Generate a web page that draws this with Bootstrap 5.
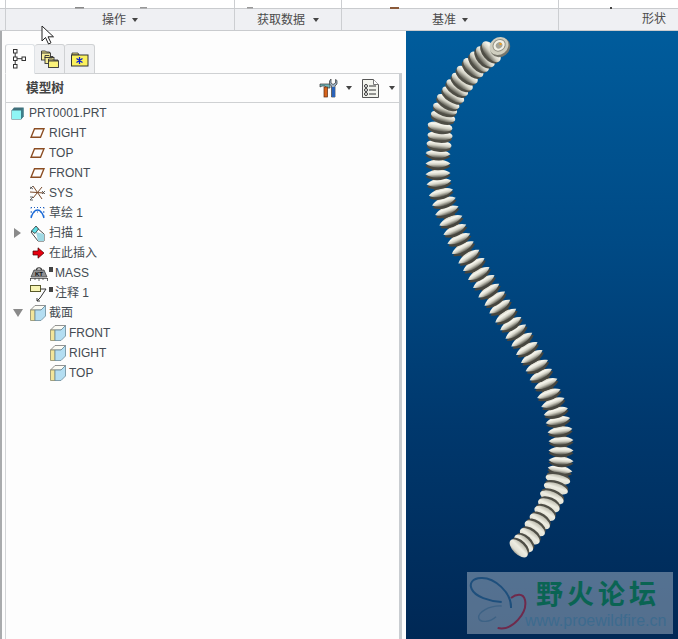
<!DOCTYPE html>
<html lang="zh-CN">
<head>
<meta charset="utf-8">
<title>模型树</title>
<link href="https://cdn.jsdelivr.net/npm/bootstrap@5.3.0/dist/css/bootstrap.min.css" rel="stylesheet">
<style>
html,body{height:100%;margin:0;overflow:hidden}
body{background:#fdfdfd;font:12px/20px "Liberation Sans","Noto Sans CJK SC",sans-serif;color:#444b52;position:relative}
.app-frame{width:678px;height:639px}
.rib-top,.rib-bar{padding-left:5px}
.rib-top{height:9px;border-bottom:1px solid #c9cbce;background:#fff}
.rib-bar{height:22px;border-bottom:1px solid #c9cbce;background:#eff0f3;overflow:hidden}
.rib-top>div,.rib-bar>div{border-left:1px solid #ccced1;flex:none;height:100%}
.rcell1{width:229px}.rcell2{width:107px}.rcell3{width:217px}.rcell4{width:120px}
.rib-bar>div{line-height:20px;font-size:12px;color:#4b4b4b;white-space:nowrap}
.rcell4-lbl{margin-left:83px}
.tri{display:inline-block;width:0;height:0;border-left:3.5px solid transparent;border-right:3.5px solid transparent;border-top:4px solid #444;flex:none}
.gap-tri{gap:6px}
.sidebar{width:406px;flex:none;border-left:2px solid #a9abad;padding-top:13px;background:#fdfdfd}
.tab-strip.nav-tabs{margin-left:3px;padding:0;height:30px;border:0;gap:0;flex-wrap:nowrap}
.tab-strip .nav-link{width:30px;height:30px;padding:0;margin:0;border:1px solid #cfd1d3;border-bottom:1px solid #cfd1d3;border-left:0;border-radius:3px 3px 0 0;background:#eff0f2;display:flex;align-items:center;justify-content:center}
.tab-strip li:first-child .nav-link{border-left:1px solid #cfd1d3}
.tab-strip .nav-link.active{background:#fdfdfd;border-bottom-color:#fdfdfd}
.tree-panel{margin-left:3px;width:397px;height:566px;margin-top:-1px;border-left:1px solid #d3d5d7;border-top:1px solid #cfd1d3;border-right:3px solid #c9cdd1}
.panel-head{height:29px;border-bottom:1px solid #cfd1d3;padding-left:20px;padding-right:4px}
.panel-title{font-weight:700;font-size:12.7px;color:#444}
.tool-tri{margin-left:7px}
.tool-doc{margin-left:10px}
.tool-tri2{margin-left:10px}
.tree-list{margin:0;padding:0;list-style:none}
.tree-row{height:20px;display:flex;align-items:center;white-space:nowrap}
.slot0{width:5px;flex:none}
.slot1{width:24px;flex:none;display:flex;align-items:center;padding-left:8px}
.slot2{width:44px;flex:none}
.ico{flex:none;margin-right:4px;display:block}
.ico-wide{margin-right:1px}
.ico-part{margin-right:5px}
.ico-sec{margin-right:3px}
.tw-down{margin-left:-1px}
.mark-dot{width:4px;height:5px;background:#444;flex:none;margin:-8px 2px 0 0}
.viewport{flex:1 1 auto;height:608px;background:linear-gradient(180deg,#005c9c 0%,#004a85 35%,#00386d 65%,#002855 100%);position:relative;overflow:hidden}
.viewport svg{display:block}
.wmark{position:absolute;left:61px;top:541px;width:206px;height:62px;background:rgba(255,255,255,.33)}
.wm-logo{position:absolute;left:1px;top:2px}
.wm-cn{position:absolute;left:69px;top:5px;font:700 27px/32px "Noto Sans CJK SC",sans-serif;letter-spacing:4px;color:#0a6453;white-space:nowrap}
.wm-url{position:absolute;left:58px;top:39px;font:16px/20px "Liberation Sans",sans-serif;color:#3d6b8e;white-space:nowrap}
.cursor-arrow{position:absolute;left:41px;top:25px}
</style>
</head>
<body>
<div class="app-frame d-flex flex-column">
  <div class="rib-top d-flex">
    <div class="rcell1"><svg width="229" height="8"><rect x="69" width="9" height="1.5" fill="#8a8a8a"/><rect x="134" width="7" height="1.5" fill="#999"/></svg></div>
    <div class="rcell2"><svg width="106" height="8"><rect x="12" width="6" height="1.5" fill="#999"/></svg></div>
    <div class="rcell3"><svg width="216" height="8"><rect x="48" width="9" height="2" fill="#8a5a3a"/></svg></div>
    <div class="rcell4"><svg width="119" height="8"><rect x="51" width="2" height="2" fill="#444"/></svg></div>
  </div>
  <div class="rib-bar d-flex">
    <div class="rcell1 d-flex align-items-center justify-content-center gap-tri"><span>操作</span><i class="tri"></i></div>
    <div class="rcell2 d-flex align-items-center justify-content-center gap-2"><span>获取数据</span><i class="tri"></i></div>
    <div class="rcell3 d-flex align-items-center justify-content-center gap-tri"><span>基准</span><i class="tri"></i></div>
    <div class="rcell4"><span class="rcell4-lbl d-inline-block">形状</span></div>
  </div>
  <div class="d-flex flex-grow-1">
    <aside class="sidebar">
      <ul class="nav nav-tabs tab-strip">
        <li class="nav-item"><a class="nav-link active" href="#" aria-label="tree">
          <svg width="14" height="20" viewBox="0 0 14 20"><g fill="#fff" stroke="#333"><rect x=".5" y=".5" width="3.5" height="3.5"/><rect x=".5" y="8" width="3.5" height="3.5"/><rect x=".5" y="15.5" width="3.5" height="3.5"/><rect x="9" y="8" width="3.5" height="3.5"/><path d="M2.2 4v4M2.2 11.500v4M4 9.700h5" fill="none"/></g></svg></a></li>
        <li class="nav-item"><a class="nav-link" href="#" aria-label="layers">
          <svg width="20" height="20" viewBox="0 0 20 20"><g stroke="#333" stroke-width=".9"><path d="M1.500 6V2h4l1 1h3v3z" fill="#f4e98a"/><rect x="1.500" y="4" width="9" height="7" fill="#f7ef9a"/><path d="M5 9V6.500h4l1 1h3V9z" fill="#f4e98a"/><rect x="5" y="8.500" width="9" height="6" fill="#f7ef9a"/><path d="M8.500 12v-2h4l1 1h4.500v1z" fill="#f4e98a"/><rect x="8.500" y="12" width="10" height="6.500" fill="#fbf27a"/></g></svg></a></li>
        <li class="nav-item"><a class="nav-link" href="#" aria-label="favorites">
          <svg width="18" height="15" viewBox="0 0 18 15"><path d="M1 3V1h6l1 2z" fill="#e9dc7a" stroke="#333" stroke-width=".8"/><rect x=".5" y="3" width="16.500" height="11" fill="#fbf15c" stroke="#333"/><path d="M8.500 5v7M5.500 6.500l6 4M11.500 6.500l-6 4" stroke="#0b1fd0" stroke-width="1.300"/></svg></a></li>
      </ul>
      <section class="tree-panel">
        <div class="panel-head d-flex align-items-center">
          <span class="panel-title">模型树</span>
          <span class="ms-auto d-flex align-items-center">
            <svg width="20" height="20" viewBox="0 0 20 20"><path d="M1 6h10v4H7.500L6 8H3L1 9z" fill="#6fb4b8" stroke="#333" stroke-width=".7"/><rect x="5" y="9" width="3.500" height="10" fill="#d8641c" stroke="#5a2a10" stroke-width=".7"/><path d="M12 1v4l2 1.500L16.500 5V1.500l1.500 1v3.500l-2 2v11h-3.500V8l-2-2V3z" fill="#9fb4c6" stroke="#333" stroke-width=".7"/><rect x="13" y="9" width="3" height="10" fill="#2a62b8"/></svg>
            <i class="tri tool-tri"></i>
            <svg class="tool-doc" width="17" height="19" viewBox="0 0 17 19"><path d="M.5.500h11l5 5v13H.5z" fill="#f4f5ef" stroke="#555"/><path d="M11.500.500v5h5" fill="#fff" stroke="#777"/><g fill="#fff" stroke="#333"><circle cx="4" cy="7" r="1.500"/><circle cx="4" cy="11" r="1.500"/><circle cx="4" cy="15" r="1.500"/></g><path d="M7 7h7M7 11h7M7 15h7" stroke="#333"/></svg>
            <i class="tri tool-tri2"></i>
          </span>
        </div>
        <ul class="tree-list">
          <li class="tree-row"><span class="slot0"></span>
            <svg class="ico ico-part" width="13" height="13" viewBox="0 0 13 13"><path d="M.5 3.500 3 .5h9.500v9L10 12.500H.5z" fill="#3f6f7a"/><rect x="1" y="3.500" width="9" height="8.500" fill="#8ff5f5"/><path d="M10 3.500 12.500.5v9L10 12.500z" fill="#3d7f8a"/></svg>
            <span>PRT0001.PRT</span></li>
          <li class="tree-row"><span class="slot1"></span>
            <svg class="ico" width="15" height="10" viewBox="0 0 15 10"><path d="M4.500.7h9.500L10.500 9.300H1z" fill="none" stroke="#8b4d22" stroke-width="1.400"/></svg><span>RIGHT</span></li>
          <li class="tree-row"><span class="slot1"></span>
            <svg class="ico" width="15" height="10" viewBox="0 0 15 10"><path d="M4.500.7h9.500L10.500 9.300H1z" fill="none" stroke="#8b4d22" stroke-width="1.400"/></svg><span>TOP</span></li>
          <li class="tree-row"><span class="slot1"></span>
            <svg class="ico" width="15" height="10" viewBox="0 0 15 10"><path d="M4.500.7h9.500L10.500 9.300H1z" fill="none" stroke="#8b4d22" stroke-width="1.400"/></svg><span>FRONT</span></li>
          <li class="tree-row"><span class="slot1"></span>
            <svg class="ico" width="15" height="16" viewBox="0 0 15 16"><path d="M3 1l9 13M12 2 3 13M0 7l14 1" stroke="#7a4a2a" stroke-width="1" fill="none"/><path d="M0 2l3 2M3 1 0 4M12 6l3 3M15 6l-3 3M0 12h3l-3 3h3" stroke="#444" stroke-width=".8" fill="none"/></svg><span>SYS</span></li>
          <li class="tree-row"><span class="slot1"></span>
            <svg class="ico" width="15" height="14" viewBox="0 0 15 14"><path d="M1 1.500h13M1 6h13" stroke="#1f5fbf" stroke-dasharray="1 2" fill="none"/><path d="M1 1.500v12M14 1.500v12" stroke="#1f5fbf" stroke-dasharray="1 3" fill="none"/><path d="M1 12C3 5 6 4 7.500 4S12 5 14 12" stroke="#1668d8" stroke-width="1.400" fill="none"/></svg><span>草绘 1</span></li>
          <li class="tree-row"><span class="slot1"><svg width="8" height="10" viewBox="0 0 8 10"><path d="M0 0l7 5-7 5z" fill="#8a8a8a"/></svg></span>
            <svg class="ico" width="15" height="17" viewBox="0 0 15 17"><path d="M1 7 6 2l8 7v7H8z" fill="#fff" stroke="#333" stroke-width=".9"/><path d="M6 7 14 9v7H8z" fill="#9fd9e4"/><path d="M1.500 6 6 1l2.500 3L5 8.500z" fill="#5fe0e8" stroke="#333" stroke-width=".8"/></svg><span>扫描 1</span></li>
          <li class="tree-row"><span class="slot1"></span>
            <svg class="ico" width="15" height="12" viewBox="0 0 15 12"><path d="M3 4h5V.8L14 6l-6 5.200V8H3z" fill="#e80010" stroke="#400" stroke-width=".7"/></svg><span>在此插入</span></li>
          <li class="tree-row"><span class="slot1"></span>
            <svg class="ico ico-wide" width="18" height="15" viewBox="0 0 18 15"><path d="M6.500 4C6.500 1 11.500 1 11.500 4" fill="none" stroke="#333" stroke-width="1.200"/><path d="M4 4h10l3 7H1z" fill="#8f9092" stroke="#333" stroke-width=".7"/><path d="M0 12.500h18M.5 12v3M5 12v2M9 12v3M13 12v2M17.500 12v3" stroke="#444" stroke-width=".8"/><text x="5" y="10" font-size="6" font-weight="700" fill="#111" font-family="Liberation Sans">KT</text></svg><i class="mark-dot"></i><span>MASS</span></li>
          <li class="tree-row"><span class="slot1"></span>
            <svg class="ico ico-wide" width="18" height="18" viewBox="0 0 18 18"><rect x=".5" y="1.500" width="10" height="6" fill="#f7f4b4" stroke="#5a5a2a"/><path d="M10.500 5H16L10 14M10 14l-3 3M7 14v3h3" fill="none" stroke="#333"/></svg><i class="mark-dot"></i><span>注释 1</span></li>
          <li class="tree-row"><span class="slot1"><svg class="tw-down" width="10" height="8" viewBox="0 0 10 8"><path d="M0 0h10L5 8z" fill="#8a8a8a"/></svg></span>
            <svg class="ico ico-sec" width="16" height="16" viewBox="0 0 16 16"><path d="M.5 5 5 .5h10.500L11 5z" fill="#fbfbf4" stroke="#777" stroke-width=".8"/><path d="M.5 5H5v10.500H.5z" fill="#f2e59a" stroke="#8a8a6a" stroke-width=".8"/><path d="M5 5h6l4.500-4.500V11L11 15.500H5z" fill="#b4def2" stroke="#6a8a9a" stroke-width=".8"/></svg><span>截面</span></li>
          <li class="tree-row"><span class="slot2"></span>
            <svg class="ico ico-sec" width="16" height="16" viewBox="0 0 16 16"><path d="M.5 5 5 .5h10.500L11 5z" fill="#fbfbf4" stroke="#777" stroke-width=".8"/><path d="M.5 5H5v10.500H.5z" fill="#f2e59a" stroke="#8a8a6a" stroke-width=".8"/><path d="M5 5h6l4.500-4.500V11L11 15.500H5z" fill="#b4def2" stroke="#6a8a9a" stroke-width=".8"/></svg><span>FRONT</span></li>
          <li class="tree-row"><span class="slot2"></span>
            <svg class="ico ico-sec" width="16" height="16" viewBox="0 0 16 16"><path d="M.5 5 5 .5h10.500L11 5z" fill="#fbfbf4" stroke="#777" stroke-width=".8"/><path d="M.5 5H5v10.500H.5z" fill="#f2e59a" stroke="#8a8a6a" stroke-width=".8"/><path d="M5 5h6l4.500-4.500V11L11 15.500H5z" fill="#b4def2" stroke="#6a8a9a" stroke-width=".8"/></svg><span>RIGHT</span></li>
          <li class="tree-row"><span class="slot2"></span>
            <svg class="ico ico-sec" width="16" height="16" viewBox="0 0 16 16"><path d="M.5 5 5 .5h10.500L11 5z" fill="#fbfbf4" stroke="#777" stroke-width=".8"/><path d="M.5 5H5v10.500H.5z" fill="#f2e59a" stroke="#8a8a6a" stroke-width=".8"/><path d="M5 5h6l4.500-4.500V11L11 15.500H5z" fill="#b4def2" stroke="#6a8a9a" stroke-width=".8"/></svg><span>TOP</span></li>
        </ul>
      </section>
    </aside>
    <main class="viewport">
      <svg id="spring" width="272" height="608" viewBox="406 31 272 608" xmlns="http://www.w3.org/2000/svg">
        <defs>
          <linearGradient id="coilFill" x1="0" y1="0" x2="0" y2="1">
            <stop offset="0" stop-color="#d6d5c9"/><stop offset=".3" stop-color="#f7f6ee"/><stop offset=".6" stop-color="#d2d1c5"/><stop offset=".85" stop-color="#85847a"/><stop offset="1" stop-color="#5a5950"/>
          </linearGradient>
          <linearGradient id="coilFillLow" x1="0" y1="0" x2="0" y2="1">
            <stop offset="0" stop-color="#bdbcae"/><stop offset=".4" stop-color="#eeede2"/><stop offset=".8" stop-color="#dfded2"/><stop offset="1" stop-color="#a5a498"/>
          </linearGradient>
        </defs>
      </svg>
      <div class="wmark">
        <svg class="wm-logo" width="60" height="60" viewBox="21 130 180 180">
          <path d="M150 232C152 185 100 140 60 142C34 143 24 158 32 175C42 198 85 212 122 214" fill="none" stroke="#1e4f7c" stroke-width="6"/>
          <path d="M110 292C155 302 200 245 192 208C187 186 165 190 150 202" fill="none" stroke="#6f2a4c" stroke-width="6"/>
          <path d="M122 226C85 224 50 245 53 262C56 276 86 276 105 258" fill="none" stroke="#3d6285" stroke-width="4"/>
        </svg>
        <div class="wm-cn">野火论坛</div>
        <div class="wm-url">www.proewildfire.cn</div>
      </div>
    </main>
  </div>
</div>
<svg class="cursor-arrow" width="14" height="21" viewBox="0 0 14 21"><path d="M1 1v15l3.500-3.500 3 6.500 2.500-1.200-3-6H12.500z" fill="#fff" stroke="#222" stroke-width="1"/></svg>
<script src="https://cdn.jsdelivr.net/npm/bootstrap@5.3.0/dist/js/bootstrap.bundle.min.js"></script>
<script>
(function(){
  var pts=[[491,52],[485,57],[479,62],[473,68],[467,75],[462,82],[457,88],[453,95],[448,102],[445,109],[443,117],[440,127],[440,136],[439,145],[438,154],[438,164],[438,174],[439,183],[441,193],[444,202],[447,211],[451,221],[455,230],[459,239],[463,248],[469,257],[474,265],[479,274],[484,282],[489,291],[495,299],[500,307],[506,316],[511,324],[516,332],[522,340],[527,349],[532,357],[537,366],[541,375],[546,384],[549,394],[553,403],[556,412],[558,421],[560,431],[561,441],[561,451],[561,461],[560,470],[558,479],[556,488],[552,497],[549,505],[545,513],[540,521],[535,528],[530,536],[524,543],[519,548]];
  var NS='http://www.w3.org/2000/svg', svg=document.getElementById('spring');
  function el(n,a,p){var e=document.createElementNS(NS,n);for(var k in a)e.setAttribute(k,a[k]);(p||svg).appendChild(e);return e;}
  el('polyline',{points:pts.map(function(p){return p.join(',');}).join(' '),fill:'none',stroke:'#44433c','stroke-width':12});
  function hAt(y){ if(y<100)return 6.500-(y-50)*.025; if(y<170)return 5.200-(y-100)*.015; if(y>500)return 5.800; if(y>470)return 4.200+(y-470)*.05; return 4.200; }
  function coil(i,low){
    var a=pts[Math.max(i-1,0)],b=pts[Math.min(i+1,pts.length-1)],p=pts[i];
    var ang=Math.atan2(b[1]-a[1],b[0]-a[0])*180/Math.PI-90;
    var h=hAt(p[1]),r=p[1]>500?11.500:12.500;
    var off=low?-2:2.200,fill=low?'url(#coilFillLow)':'url(#coilFill)';
    var g=el('g',{transform:'translate('+p[0]+' '+p[1]+') rotate('+ang+')'});
    if(h>4.500){
      el('ellipse',{cx:0,cy:off,rx:r-.5,ry:h,fill:'#4f4e46'},g);
      el('ellipse',{cx:0,cy:-off*.2,rx:r,ry:h,fill:fill},g);
    }else{
      var lens=function(o,f){return el('path',{d:'M'+(-r)+' '+o+'C'+(-r*.45)+' '+(o-h*1.3)+' '+(r*.45)+' '+(o-h*1.3)+' '+r+' '+o+'C'+(r*.45)+' '+(o+h*1.3)+' '+(-r*.45)+' '+(o+h*1.3)+' '+(-r)+' '+o+'Z',fill:f},g);};
      lens(off,'#47463f');
      lens(-off*.2,fill);
    }
  }
  var split=pts.findIndex(function(p){return p[1]>470;});
  for(var j=split-1;j>=0;j--)coil(j,false);
  for(var i=split;i<pts.length;i++)coil(i,true);
  var t=el('g',{transform:'translate(499 46) rotate(-38)'});
  el('ellipse',{cx:0,cy:2,rx:10.500,ry:9,fill:'#77766c'},t);
  el('ellipse',{cx:0,cy:0,rx:10,ry:8.500,fill:'#cfcebf'},t);
  el('ellipse',{cx:.5,cy:-.500,rx:6.500,ry:5.500,fill:'#f2f1e6',stroke:'#8f8e82','stroke-width':1},t);
  el('ellipse',{cx:.5,cy:-.500,rx:3.500,ry:3,fill:'#a5a498'},t);
  el('rect',{x:499.500,y:43,width:2,height:2,fill:'#f0a020'});
})();
</script>
</body>
</html>
